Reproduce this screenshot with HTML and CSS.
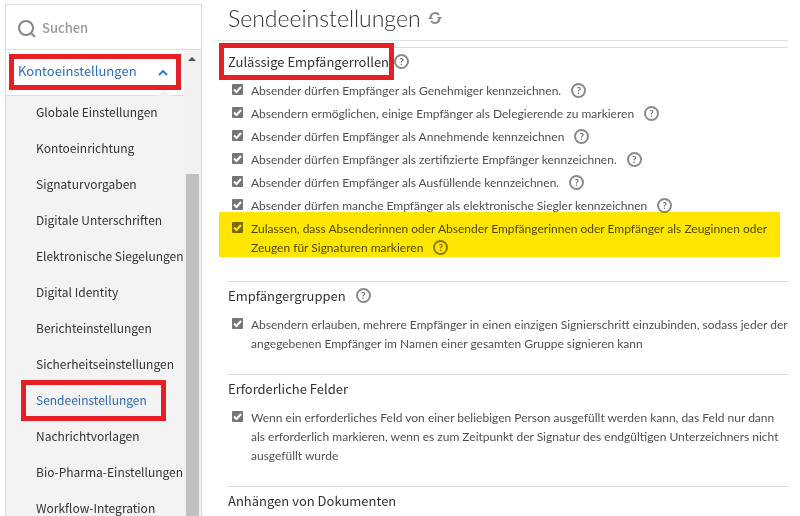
FILE: index.html
```html
<!DOCTYPE html>
<html lang="de">
<head>
  <meta charset="UTF-8">
  <meta name="viewport" content="width=device-width, initial-scale=1.0">
  <title>Sendeeinstellungen</title>
  <link rel="stylesheet" href="styles.css">
</head>
<body>
  <aside class="sidebar">
    <div class="search">
      <svg class="search-icon" viewBox="0 0 20 20" aria-hidden="true">
        <circle cx="9" cy="9" r="7"></circle>
        <path d="M14 14l4 4"></path>
      </svg>
      <input type="search" class="search-input" placeholder="Suchen" aria-label="Suchen">
    </div>
    <div class="menu">
      <nav class="menu-body">
        <div class="menu-head">
          <button type="button" class="menu-toggle marked" aria-expanded="true">
            Kontoeinstellungen
            <svg class="chevron" viewBox="0 0 10 6" aria-hidden="true"><path d="M1 5l4-4 4 4"></path></svg>
          </button>
        </div>
        <ul class="menu-list">
          <li><a href="#">Globale Einstellungen</a></li>
          <li><a href="#">Kontoeinrichtung</a></li>
          <li><a href="#">Signaturvorgaben</a></li>
          <li><a href="#">Digitale Unterschriften</a></li>
          <li><a href="#">Elektronische Siegelungen</a></li>
          <li><a href="#">Digital Identity</a></li>
          <li><a href="#">Berichteinstellungen</a></li>
          <li><a href="#">Sicherheitseinstellungen</a></li>
          <li><a href="#" class="active marked" aria-current="page">Sendeeinstellungen</a></li>
          <li><a href="#">Nachrichtvorlagen</a></li>
          <li><a href="#">Bio-Pharma-Einstellungen</a></li>
          <li><a href="#">Workflow-Integration</a></li>
        </ul>
      </nav>
      <div class="scrollbar" aria-hidden="true">
        <div class="scroll-up"></div>
        <div class="scroll-thumb"></div>
      </div>
    </div>
  </aside>

  <main class="content">
    <header class="page-head">
      <h1>Sendeeinstellungen</h1>
      <button type="button" class="refresh" aria-label="Aktualisieren">
        <svg viewBox="0 0 14 14" aria-hidden="true">
          <path class="arc" d="M2.500 6a4.700 4.700 0 0 1 8.500-2M11.500 8a4.700 4.700 0 0 1-8.500 2"></path>
          <path class="tip" d="M9 6h5l-2.500 3zM0 8h5L2.500 5z"></path>
        </svg>
      </button>
    </header>

    <section class="group">
      <h2><span class="marked">Zulässige Empfängerrollen</span><button type="button" class="help" aria-label="Hilfe">?</button></h2>
      <ul class="options">
        <li><input type="checkbox" id="opt1" checked><p><label for="opt1">Absender dürfen Empfänger als Genehmiger kennzeichnen.</label><button type="button" class="help">?</button></p></li>
        <li><input type="checkbox" id="opt2" checked><p><label for="opt2">Absendern ermöglichen, einige Empfänger als Delegierende zu markieren</label><button type="button" class="help">?</button></p></li>
        <li><input type="checkbox" id="opt3" checked><p><label for="opt3">Absender dürfen Empfänger als Annehmende kennzeichnen</label><button type="button" class="help">?</button></p></li>
        <li><input type="checkbox" id="opt4" checked><p><label for="opt4">Absender dürfen Empfänger als zertifizierte Empfänger kennzeichnen.</label><button type="button" class="help">?</button></p></li>
        <li><input type="checkbox" id="opt5" checked><p><label for="opt5">Absender dürfen Empfänger als Ausfüllende kennzeichnen.</label><button type="button" class="help">?</button></p></li>
        <li><input type="checkbox" id="opt6" checked><p><label for="opt6">Absender dürfen manche Empfänger als elektronische Siegler kennzeichnen</label><button type="button" class="help">?</button></p></li>
        <li class="highlight"><input type="checkbox" id="opt7" checked><p><label for="opt7">Zulassen, dass Absenderinnen oder Absender Empfängerinnen oder Empfänger als Zeuginnen oder Zeugen für Signaturen markieren</label><button type="button" class="help">?</button></p></li>
      </ul>
    </section>

    <section class="group">
      <h2>Empfängergruppen<button type="button" class="help" aria-label="Hilfe">?</button></h2>
      <ul class="options">
        <li><input type="checkbox" id="opt8" checked><p><label for="opt8">Absendern erlauben, mehrere Empfänger in einen einzigen Signierschritt einzubinden, sodass jeder der angegebenen Empfänger im Namen einer gesamten Gruppe signieren kann</label></p></li>
      </ul>
    </section>

    <section class="group">
      <h2>Erforderliche Felder</h2>
      <ul class="options">
        <li><input type="checkbox" id="opt9" checked><p><label for="opt9">Wenn ein erforderliches Feld von einer beliebigen Person ausgefüllt werden kann, das Feld nur dann als erforderlich markieren, wenn es zum Zeitpunkt der Signatur des endgültigen Unterzeichners nicht ausgefüllt wurde</label></p></li>
      </ul>
    </section>

    <section class="group">
      <h2>Anhängen von Dokumenten</h2>
    </section>
  </main>
</body>
</html>
```

FILE: styles.css
```css
* {
  box-sizing: border-box;
}

body {
  margin: 0;
  height: 100vh;
  display: flex;
  overflow: hidden;
  background: #fff;
  color: #323232;
  font-family: "Noto Sans CJK SC", "Open Sans", sans-serif;
  font-size: 12px;
}

h1, h2, p, ul {
  margin: 0;
  padding: 0;
  font-weight: 400;
}

ul {
  list-style: none;
}

button {
  font-family: inherit;
  background: none;
  border: none;
  padding: 0;
  cursor: pointer;
}

.marked {
  outline: 5px solid #e61e25;
}

/* sidebar */
.sidebar {
  flex: none;
  display: flex;
  flex-direction: column;
  width: 197px;
  margin: 4px 0 0 5px;
  border: 1px solid #dcdcdc;
  border-bottom: none;
}

.search {
  flex: none;
  display: flex;
  align-items: center;
  gap: 5px;
  height: 45px;
  padding: 3px 11px 0;
  border-bottom: 1px solid #dcdcdc;
}

.search-icon {
  flex: none;
  width: 20px;
  height: 20px;
  fill: none;
  stroke: #858585;
  stroke-width: 2;
}

.search-input {
  flex: 1;
  min-width: 0;
  height: 22px;
  padding: 0 0 2px;
  border: none;
  outline: none;
  background: none;
  font: 500 13px "Noto Sans CJK SC", "Open Sans", sans-serif;
}

.search-input::placeholder {
  color: #999;
}

.menu {
  flex: 1;
  min-height: 0;
  display: flex;
}

.menu-body {
  flex: 1;
  min-width: 0;
  overflow: hidden;
  background: #f3f3f3;
}

.menu-head {
  position: relative;
  height: 46px;
  padding: 9px 8px;
  background: #fff;
  border-bottom: 1px solid #dcdcdc;
}

/* notch pointing at the open menu entry */
.menu-head::after {
  content: "";
  position: absolute;
  right: 12px;
  bottom: -1px;
  width: 16px;
  height: 6px;
  background: #f0f0f0;
  clip-path: polygon(50% 0, 100% 100%, 0 100%);
}

.menu-toggle {
  display: flex;
  align-items: center;
  justify-content: space-between;
  width: 100%;
  height: 26px;
  padding: 0 8px 3px 4px;
  color: #2c6cb8;
  font-size: 13px;
}

.chevron {
  width: 10px;
  height: 6px;
  margin-top: 4px;
  fill: none;
  stroke: #2c7fcf;
  stroke-width: 2;
}

.menu-list li {
  display: flex;
  align-items: center;
  height: 36px;
  padding: 0 0 4px 20px;
}

.menu-list a {
  padding: 5px 0 7px 10px;
  color: #323232;
  line-height: 19px;
  text-decoration: none;
  white-space: nowrap;
}

.menu-list a.active {
  padding-right: 14px;
  color: #2c6cb8;
}

.scrollbar {
  flex: none;
  width: 17px;
  padding: 7px 2px 0;
  background: #f1f1f1;
}

.scroll-up {
  width: 8px;
  height: 4px;
  margin: 0 2px 113px;
  background: #505050;
  clip-path: polygon(50% 0, 100% 100%, 0 100%);
}

.scroll-thumb {
  height: calc(100% - 117px);
  background: #c1c1c1;
}

/* main column */
.content {
  flex: 1;
  min-width: 0;
  padding: 0 12px 0 13px;
}

.page-head {
  display: flex;
  align-items: center;
  gap: 7px;
  height: 41px;
  padding: 0 0 4px 13px;
  border-bottom: 1px solid #e1e1e1;
}

h1 {
  color: #323232;
  font-family: Lato, "Open Sans", sans-serif;
  font-size: 23px;
  font-weight: 300;
  line-height: 36px;
}

.refresh svg {
  display: block;
  width: 14px;
  height: 14px;
}

.arc {
  fill: none;
  stroke: #8a8a8a;
  stroke-width: 2;
}

.tip {
  fill: #8a8a8a;
}

.group {
  margin-left: 13px;
  padding-bottom: 17px;
  border-top: 1px solid #dcdcdc;
}

.page-head + .group {
  margin-top: 6px;
  padding-bottom: 20px;
}

.group h2 {
  display: flex;
  align-items: center;
  height: 27px;
  font-size: 13px;
  line-height: 27px;
}

.group h2 .marked {
  margin-left: -4px;
  padding-left: 4px;
  background: #fff;
}

.group h2 .marked + .help {
  margin-left: 5px;
}

.options {
  padding: 6px 0 0 4px;
}

.options li {
  position: relative;
  display: flex;
  gap: 8px;
  margin-bottom: 4px;
  color: #505050;
  font-family: Lato, "Open Sans", sans-serif;
  line-height: 19px;
}

.options input {
  flex: none;
  appearance: none;
  width: 11px;
  height: 11px;
  margin: 3px 0 0;
  border-radius: 1px;
  background: #767676;
}

.options input:checked {
  background: #767676 url("data:image/svg+xml,%3Csvg xmlns='http://www.w3.org/2000/svg' viewBox='0 0 11 11'%3E%3Cpath d='M2 5.500l2.500 2.500L9 3' fill='none' stroke='white' stroke-width='2'/%3E%3C/svg%3E");
}

.help {
  flex: none;
  width: 15px;
  height: 15px;
  margin-left: 10px;
  border: 2px solid #8a8a8a;
  border-radius: 50%;
  color: #6e6e6e;
  font-family: Lato, "Open Sans", sans-serif;
  font-size: 10px;
  font-weight: 700;
  line-height: 11px;
  vertical-align: middle;
}

.options .help {
  margin-top: -3px;
  margin-bottom: -1px;
}

/* marker pen over the whole option */
.highlight::after {
  content: "";
  position: absolute;
  inset: -7px 8px 0 -13px;
  background: #ffe600;
  mix-blend-mode: multiply;
  pointer-events: none;
}
```
